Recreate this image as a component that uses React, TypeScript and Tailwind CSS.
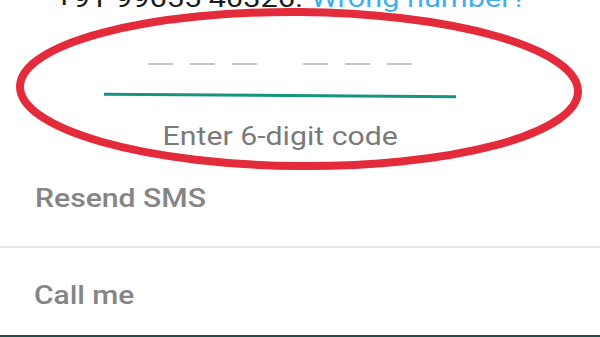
import React from "react";

function Dash() {
  return <div className="w-[25px] h-[2px] bg-[#c6c6c6]" />;
}

export default function App() {
  return (
    <div
      className="relative w-[600px] h-[337px] overflow-hidden bg-white flex flex-col"
      style={{ fontFamily: "Roboto, 'Noto Sans', sans-serif" }}
    >
      {/* Verification section */}
      <div className="h-[170px] flex flex-col shrink-0">
        <div className="-mt-[15px] pl-[47px] text-[26px] leading-[26px] whitespace-nowrap origin-left scale-x-[1.18]">
          <span className="text-[#1c1c1c]">+91 99655 40326. </span>
          <span className="text-[#3fb0ec]">Wrong number?</span>
        </div>
        <div className="w-[560px] flex flex-col items-center">
          <div className="mt-[52px] flex items-center">
            <div className="flex gap-[17px]">
              <Dash />
              <Dash />
              <Dash />
            </div>
            <div className="w-[46px]" />
            <div className="flex gap-[17px]">
              <Dash />
              <Dash />
              <Dash />
            </div>
          </div>
          <div className="mt-[29px] w-[352px] h-[3px] bg-[#169482] rotate-[0.4deg]" />
          <div className="mt-[27px] text-[25px] leading-[25px] text-[#7a7a7a] whitespace-nowrap scale-x-[1.21]">
            Enter 6-digit code
          </div>
        </div>
      </div>

      {/* Resend SMS */}
      <div className="pt-[15px] pb-[35px] pl-[35px] border-b-2 border-[#e6e6e6] shrink-0">
        <div className="text-[26px] leading-[26px] font-medium text-[#858585] whitespace-nowrap origin-left scale-x-[1.16]">
          Resend SMS
        </div>
      </div>

      {/* Call me */}
      <div className="flex-1 pt-[34px] pl-[34px]">
        <div className="text-[26px] leading-[26px] font-medium text-[#858585] whitespace-nowrap origin-left scale-x-[1.15]">
          Call me
        </div>
      </div>

      <div className="h-[2px] bg-[#1f4f4a] shrink-0" />

      {/* Red annotation ellipse */}
      <svg
        className="absolute inset-0 pointer-events-none"
        width="600"
        height="337"
        viewBox="0 0 600 337"
      >
        <ellipse
          cx="299"
          cy="89"
          rx="279"
          ry="77"
          fill="none"
          stroke="#e42b3b"
          strokeWidth="8"
          transform="rotate(0.5 299 89)"
        />
      </svg>
    </div>
  );
}
